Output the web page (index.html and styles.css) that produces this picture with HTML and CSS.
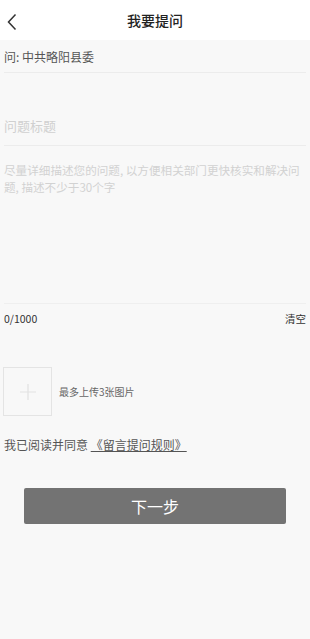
FILE: index.html
```html
<!DOCTYPE html>
<html lang="zh-CN">
<head>
    <meta charset="UTF-8">
    <meta name="viewport" content="width=device-width, initial-scale=1.0">
    <title>我要提问</title>
    <link rel="stylesheet" href="styles.css">
</head>
<body>
    <div class="header">
        <span class="back">
            <svg width="10" height="18" viewBox="0 0 10 18"><path d="M8.5 1.5 L1.5 9 L8.5 16.5" fill="none" stroke="#333" stroke-width="1.5"/></svg>
        </span>
        <h1>我要提问</h1>
    </div>
    <div class="form">
        <div class="row target">问: 中共略阳县委</div>
        <div class="row title">问题标题</div>
        <div class="desc">尽量详细描述您的问题, 以方便相关部门更快核实和解决问题, 描述不少于30个字</div>
        <div class="count">
            <span>0/1000</span>
            <span>清空</span>
        </div>
        <div class="upload">
            <div class="add-box">
                <svg width="16" height="16" viewBox="0 0 16 16"><path d="M8 0 V16 M0 8 H16" stroke="#e2e2e2" stroke-width="1.2"/></svg>
            </div>
            <span>最多上传3张图片</span>
        </div>
        <div class="agree">我已阅读并同意 <a href="#">《留言提问规则》</a></div>
        <button class="next">下一步</button>
    </div>
</body>
</html>
```

FILE: styles.css
```css
body {
    margin: 0;
    background: #f8f8f8;
    font-family: "Noto Sans CJK SC", "Noto Sans", sans-serif;
    color: #333;
    width: 310px;
    min-height: 639px;
}
.header {
    height: 40px;
    background: #fff;
    display: flex;
    align-items: center;
    justify-content: center;
    position: relative;
}
.header h1 {
    margin: 0;
    font-size: 14px;
    font-weight: 500;
    color: #222;
}
.back {
    position: absolute;
    left: 7px;
    top: 12px;
}
.form {
    padding: 0 4px;
}
.row {
    border-bottom: 1px solid #ececec;
}
.target {
    height: 32px;
    line-height: 34px;
    font-size: 12px;
    color: #555;
}
.title {
    height: 73px;
    box-sizing: border-box;
    display: flex;
    align-items: flex-end;
    padding-bottom: 10px;
    font-size: 13px;
    line-height: 18px;
    color: #d0d0d0;
}
.desc {
    height: 158px;
    box-sizing: border-box;
    padding-top: 16px;
    font-size: 11.6px;
    line-height: 17px;
    color: #d2d2d2;
    border-bottom: 1px solid #efefef;
}
.count {
    display: flex;
    justify-content: space-between;
    font-size: 10.5px;
    color: #333;
    padding-top: 7px;
}
.upload {
    display: flex;
    align-items: center;
    gap: 7px;
    margin-top: 41px;
    font-size: 10px;
    color: #666;
}
.add-box {
    width: 47px;
    height: 47px;
    border: 1px solid #e4e4e4;
    display: flex;
    align-items: center;
    justify-content: center;
    margin-left: -1px;
}
.agree {
    margin-top: 20px;
    font-size: 12px;
    color: #555;
}
.agree a {
    color: #555;
    text-decoration: underline;
}
.next {
    display: block;
    width: 262px;
    height: 36px;
    margin: 35px auto 0;
    background: #737373;
    color: #fff;
    border: none;
    border-radius: 2px;
    font-family: inherit;
    font-size: 16px;
}
```
